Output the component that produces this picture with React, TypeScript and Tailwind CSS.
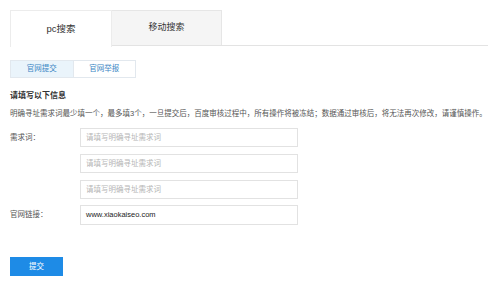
import * as React from "react"

const FONT = { fontFamily: '"Liberation Sans", "Noto Sans CJK SC", sans-serif' }

const TIP = "明确寻址需求词最少填一个，最多填3个，一旦提交后，百度审核过程中，所有操作将被冻结；数据通过审核后，将无法再次修改，请谨慎操作。"

export default function App() {
    return (
        <div className="w-[500px] h-[285px] bg-white overflow-hidden pl-[10px] pt-[10px]" style={FONT}>
            {/* Top tabs */}
            <div className="flex w-[478px] h-[36px] border-b border-[#e3e3e3]">
                <div className="w-[102px] h-[37px] -mb-px flex items-center justify-center bg-white border border-b-0 border-[#ececec] text-[9.5px] text-[#333]">
                    pc搜索
                </div>
                <div className="w-[110px] h-full flex items-center justify-center bg-[#f5f5f5] border-t border-r border-[#e6e6e6] text-[9px] text-[#333]">
                    移动搜索
                </div>
            </div>

            {/* Sub tabs */}
            <div className="mt-[14px] flex w-[126px] h-[18px] border border-[#e2e8ee]">
                <div className="flex-1 flex items-center justify-center bg-[#eaf4fb] text-[7.5px] text-[#3a86c4]">官网提交</div>
                <div className="flex-1 flex items-center justify-center border-l border-[#e2e8ee] bg-white text-[7.5px] text-[#3a86c4]">官网举报</div>
            </div>

            {/* Info */}
            <h2 className="mt-[12px] text-[8px] leading-[12px] font-bold text-[#333]">请填写以下信息</h2>
            <p className="mt-[6px] text-[7.5px] leading-[12px] text-[#555] whitespace-nowrap">{TIP}</p>

            {/* Form */}
            <div className="mt-[8px] flex">
                <div className="w-[70px] pt-[5px] text-[7.5px] leading-[10px] text-[#555]">需求词：</div>
                <div className="flex flex-col gap-[7px]">
                    {[0, 1, 2].map((i) => (
                        <div key={i} className="w-[218px] h-[19px] border border-[#e2e2e2] flex items-center px-[5px] text-[7.5px] text-[#b5b5b5]">
                            请填写明确寻址需求词
                        </div>
                    ))}
                </div>
            </div>
            <div className="mt-[6px] flex items-center">
                <div className="w-[70px] text-[7.5px] text-[#555]">官网链接：</div>
                <div className="w-[218px] h-[20px] border border-[#e2e2e2] flex items-center px-[5px] text-[7.5px] text-[#222]">
                    www.xiaokaiseo.com
                </div>
            </div>

            <button className="mt-[32px] w-[53px] h-[19px] bg-[#1e8be6] text-white text-[7.5px] flex items-center justify-center">
                提交
            </button>
        </div>
    )
}
